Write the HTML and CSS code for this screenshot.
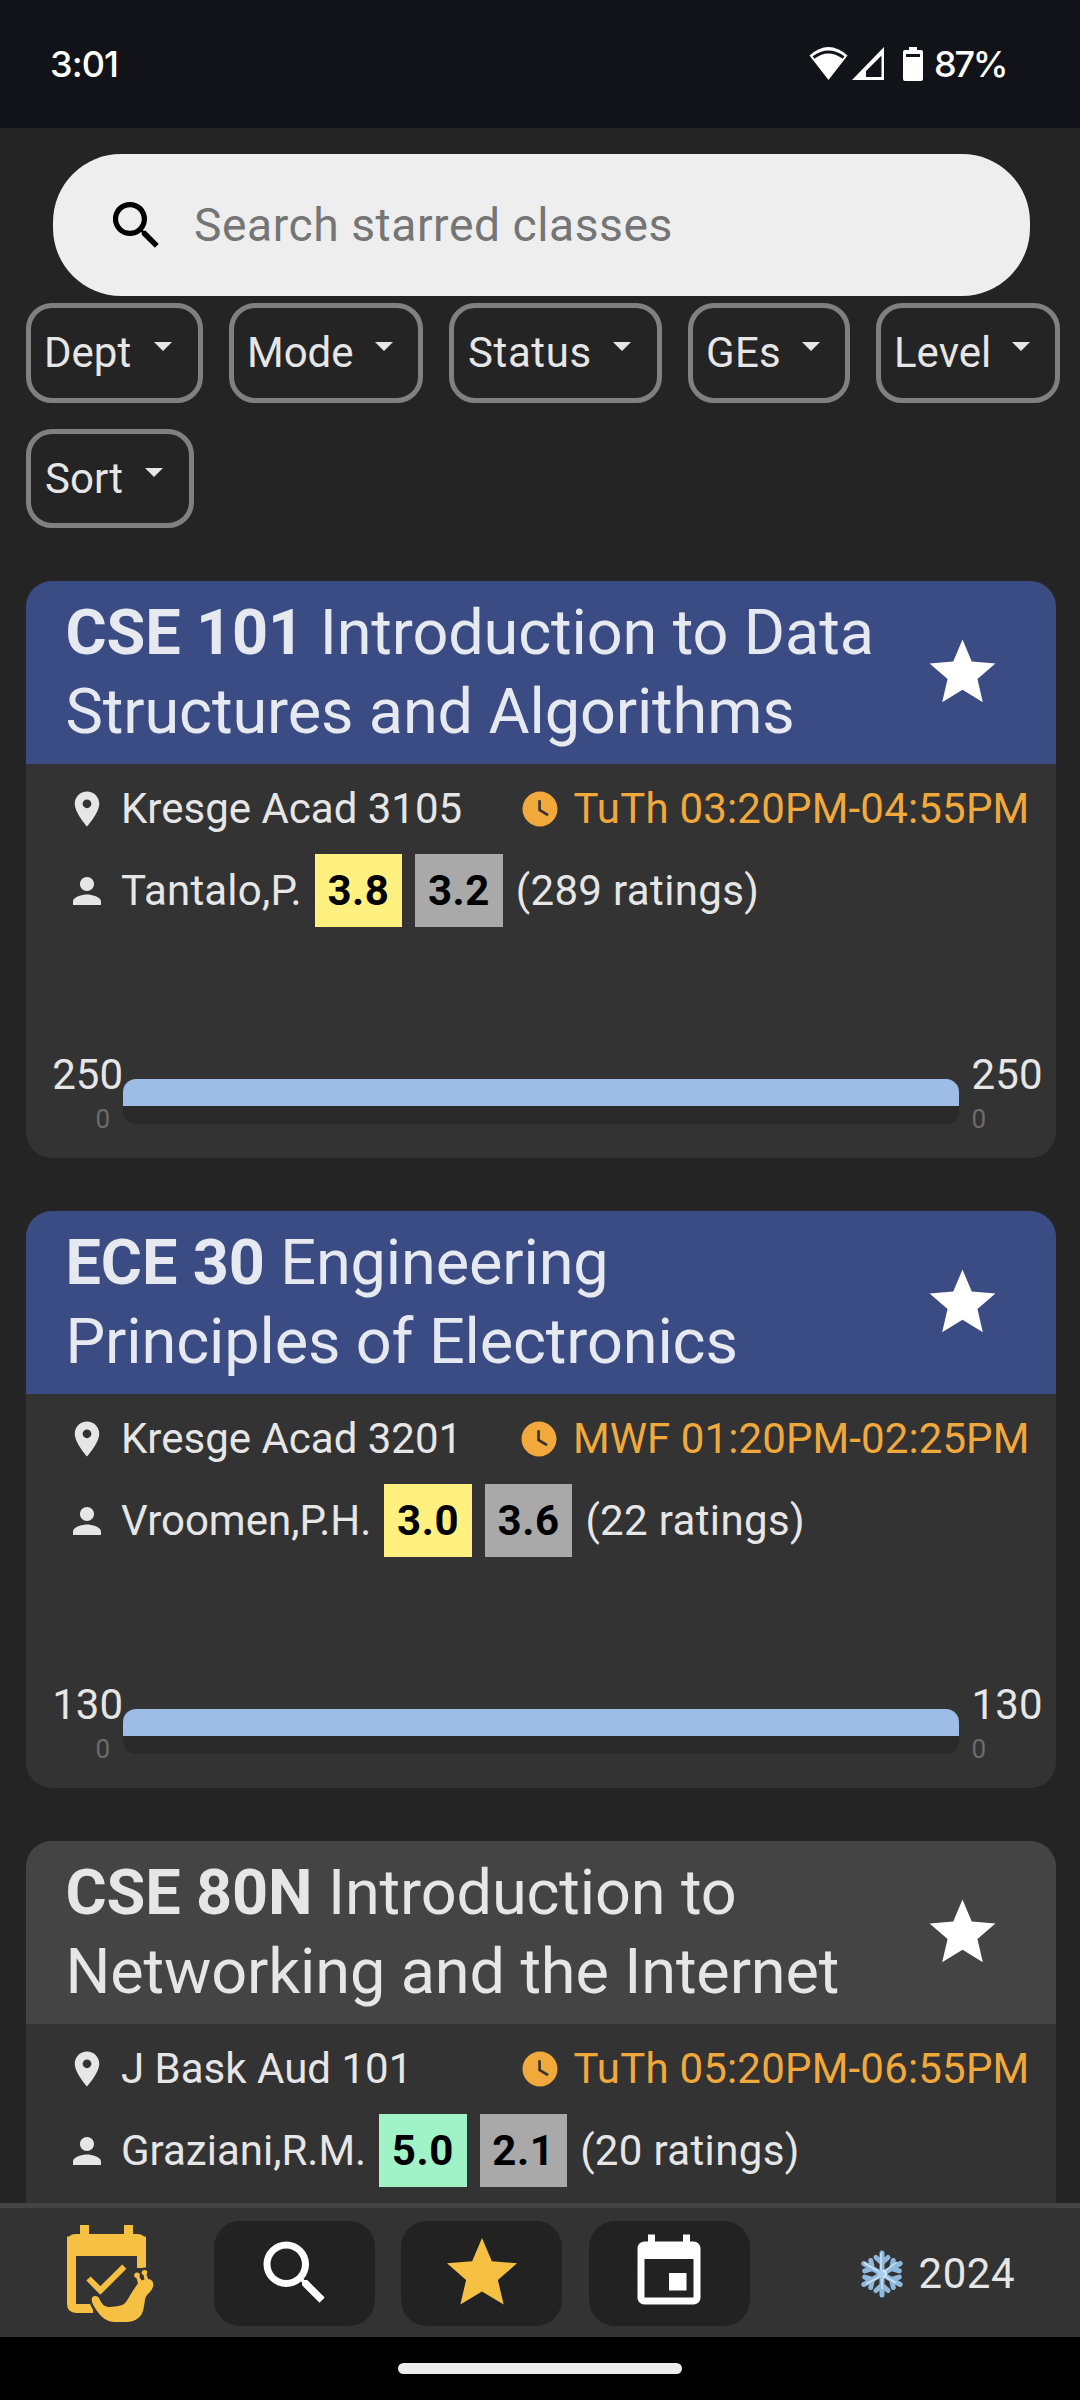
FILE: index.html
```html
<!DOCTYPE html>
<html lang="en">
<head>
<meta charset="utf-8">
<title>Starred classes</title>
<link rel="stylesheet" href="styles.css">
</head>
<body>
<svg width="0" height="0" class="defs">
  <symbol id="search" viewBox="0 0 24 24"><path d="M15.5 14h-.79l-.28-.27A6.47 6.47 0 0 0 16 9.5 6.5 6.5 0 1 0 9.5 16c1.61 0 3.09-.59 4.23-1.57l.27.28v.79l5 4.99L20.49 19l-4.99-5zm-6 0C7.01 14 5 11.99 5 9.5S7.01 5 9.5 5 14 7.01 14 9.5 11.99 14 9.5 14z"/></symbol>
  <symbol id="star" viewBox="0 0 24 24"><path d="M12 17.27L18.18 21l-1.64-7.03L22 9.24l-7.19-.61L12 2 9.19 8.63 2 9.24l5.46 4.73L5.82 21z"/></symbol>
  <symbol id="pin" viewBox="0 0 24 24"><path d="M12 2C8.13 2 5 5.13 5 9c0 5.25 7 13 7 13s7-7.75 7-13c0-3.87-3.13-7-7-7zm0 9.5a2.5 2.5 0 0 1 0-5 2.5 2.5 0 0 1 0 5z"/></symbol>
  <symbol id="person" viewBox="0 0 24 24"><path d="M12 12c2.21 0 4-1.79 4-4s-1.79-4-4-4-4 1.790-4 4 1.790 4 4 4zm0 2c-2.670 0-8 1.340-8 4v2h16v-2c0-2.660-5.330-4-8-4z"/></symbol>
  <symbol id="clock" viewBox="0 0 24 24"><path d="M12 2C6.500 2 2 6.500 2 12s4.500 10 10 10 10-4.500 10-10S17.500 2 12 2zm4.200 14.200L11 13V7h1.500v5.200l4.500 2.700-.8 1.300z"/></symbol>
  <symbol id="event" viewBox="0 0 24 24"><path d="M17 12h-5v5h5v-5zM16 1v2H8V1H6v2H5c-1.110 0-1.990.9-1.990 2L3 19c0 1.100.890 2 2 2h14c1.100 0 2-.9 2-2V5c0-1.100-.9-2-2-2h-1V1h-2zm3 18H5V8h14v11z"/></symbol>
</svg>

<header class="status-bar">
  <span class="time">3:01</span>
  <div class="indicators">
    <svg class="wifi" viewBox="0 0 38 34"><path fill="#fff" d="M0 8.500Q19-8.500 38 8.500L19 33Z"/><path d="M4 10.500Q19-.5 34 10.500" fill="none" stroke="#121318" stroke-width="3"/></svg>
    <svg class="signal" viewBox="0 0 32 34"><path fill="#fff" fill-rule="evenodd" d="M32 0V33H0ZM29.500 8.500V30H14V24Z"/></svg>
    <svg class="battery" viewBox="0 0 20 34"><path fill="#fff" fill-rule="evenodd" d="M6 0h8v3h4q2 0 2 2v27q0 2-2 2H2q-2 0-2-2V5q0-2 2-2h4zM3 7v3h14V7z"/></svg>
    <span class="percent">87%</span>
  </div>
</header>

<main class="content">
  <div class="search-box">
    <svg class="search-icon"><use href="#search"/></svg>
    <span>Search starred classes</span>
  </div>
  <div class="filters">
    <div class="chip dept">Dept</div>
    <div class="chip mode">Mode</div>
    <div class="chip status">Status</div>
    <div class="chip ges">GEs</div>
    <div class="chip level">Level</div>
    <div class="chip sort">Sort</div>
  </div>

  <article class="card">
    <div class="card-head blue">
      <h2><b>CSE 101</b> Introduction to Data Structures and Algorithms</h2>
      <svg class="star"><use href="#star"/></svg>
    </div>
    <div class="row">
      <svg><use href="#pin"/></svg><span>Kresge Acad 3105</span>
      <div class="when"><svg><use href="#clock"/></svg><span>TuTh 03:20PM-04:55PM</span></div>
    </div>
    <div class="row teacher">
      <svg><use href="#person"/></svg><span class="tantalo">Tantalo,P.</span>
      <b class="score yellow">3.8</b><b class="score">3.2</b><span class="ratings">(289 ratings)</span>
    </div>
    <div class="seats">
      <div class="count left"><span>250</span><small>0</small></div>
      <div class="bar"><div class="fill"></div></div>
      <div class="count"><span>250</span><small>0</small></div>
    </div>
  </article>

  <article class="card">
    <div class="card-head blue">
      <h2><b>ECE 30</b> Engineering Principles of Electronics</h2>
      <svg class="star"><use href="#star"/></svg>
    </div>
    <div class="row">
      <svg><use href="#pin"/></svg><span>Kresge Acad 3201</span>
      <div class="when mwf"><svg><use href="#clock"/></svg><span>MWF 01:20PM-02:25PM</span></div>
    </div>
    <div class="row teacher">
      <svg><use href="#person"/></svg><span>Vroomen,P.H.</span>
      <b class="score yellow">3.0</b><b class="score">3.6</b><span class="ratings">(22 ratings)</span>
    </div>
    <div class="seats">
      <div class="count left"><span>130</span><small>0</small></div>
      <div class="bar"><div class="fill"></div></div>
      <div class="count"><span>130</span><small>0</small></div>
    </div>
  </article>

  <article class="card">
    <div class="card-head">
      <h2><b>CSE 80N</b> Introduction to Networking and the Internet</h2>
      <svg class="star"><use href="#star"/></svg>
    </div>
    <div class="row">
      <svg><use href="#pin"/></svg><span>J Bask Aud 101</span>
      <div class="when"><svg><use href="#clock"/></svg><span>TuTh 05:20PM-06:55PM</span></div>
    </div>
    <div class="row teacher">
      <svg><use href="#person"/></svg><span>Graziani,R.M.</span>
      <b class="score green">5.0</b><b class="score">2.1</b><span class="ratings">(20 ratings)</span>
    </div>
  </article>
</main>

<nav class="tabs">
  <svg class="logo" viewBox="0 0 88 98">
    <path fill="none" stroke="#f6c142" stroke-width="9" d="M26 83.500H9Q4.500 83.500 4.500 79V16H74.500V43"/>
    <path d="M0 31V18Q0 9 9 9H13V0H22V9H57V0H66V9H70Q79 9 79 18V31Z"/>
    <path fill="none" stroke="#f6c142" stroke-width="6" d="M21.500 53.500L33.300 65.500L57.300 41.700"/>
    <path class="snail" d="M24.700 75C24 70.500 30 69.500 32 73C35 80 38 82 43 82C50 81.500 56 81 59 77C62 73 64 68 71 58.500L69.500 53C65.500 52.500 67 47.500 70 47.500C74 47.500 72.500 51 72.500 52L74.500 55.500L77.500 54.500L76.500 50C73 48.500 75 45 77.500 45C81 45 80.500 48 79.500 49.500L81 54C86 54.500 87.500 59 85.500 63C83 69 78.500 69 78 75L76.500 84C75 92 68 97 60 97H47C38 97 31 88 28 83C26 80 25 77.500 24.700 75Z"/>
  </svg>
  <div class="tab"><svg><use href="#search"/></svg></div>
  <div class="tab active"><svg><use href="#star"/></svg></div>
  <div class="tab"><svg><use href="#event"/></svg></div>
  <div class="term">
    <svg class="snow" viewBox="-21 -24 42 48">
      <defs><g id="arm"><path d="M0 0V-21M0-11L-6-16.500M0-11L6-16.500"/></g></defs>
      <g fill="none" stroke="#8fb9dc" stroke-width="5" stroke-linecap="round"><use href="#arm"/><use href="#arm" transform="rotate(60)"/><use href="#arm" transform="rotate(120)"/><use href="#arm" transform="rotate(180)"/><use href="#arm" transform="rotate(240)"/><use href="#arm" transform="rotate(300)"/></g>
      <path d="M-1-4V-21M3-3L15-12M-4-3L-18-11M-3 3L-16 10M0 5V15M4 3L14 9" stroke="#cfe3f3" stroke-width="1.500" fill="none"/>
      <circle r="4.500" fill="#a9cdea"/><path d="M1-3A3 3 0 0 1 1 3" stroke="#e3f0fa" stroke-width="1.500" fill="none"/>
    </svg>
    <span>2024</span>
  </div>
</nav>
<footer class="gesture"><div class="handle"></div></footer>
</body>
</html>
```
FILE: styles.css
```css
* { box-sizing: border-box; }
body {
  margin: 0;
  width: 1080px;
  height: 2400px;
  overflow: hidden;
  display: flex;
  flex-direction: column;
  background: #242424;
  color: #e6e6e6;
  font: 42px/54px Roboto, sans-serif;
}
svg { display: block; flex: none; fill: currentColor; }
.defs { position: absolute; }

.status-bar {
  flex: none;
  height: 128px;
  padding: 0 75px 0 50px;
  display: flex;
  justify-content: space-between;
  align-items: center;
  background: #121318;
  color: #fff;
  font: 500 36px/50px Inter, sans-serif;
}
.time { letter-spacing: -0.9px; }
.indicators { display: flex; align-items: center; }
.wifi { width: 39px; height: 34px; }
.signal { width: 32px; height: 34px; margin-left: 4px; }
.battery { width: 20px; height: 34px; margin-left: 19px; }
.percent { width: 71px; margin-left: 11px; letter-spacing: -2.2px; }

.content {
  flex: 1;
  min-height: 0;
  overflow: hidden;
  display: flex;
  flex-direction: column;
}
.search-box {
  flex: none;
  margin: 26px 50px 0 53px;
  height: 142px;
  border-radius: 68px;
  padding-left: 52px;
  display: flex;
  align-items: center;
  gap: 26px;
  background: #eee;
  color: #757575;
  font-size: 46.2px;
  letter-spacing: 0.55px;
}
.search-icon { width: 63px; height: 63px; color: #000; }
.filters {
  flex: none;
  display: flex;
  flex-wrap: wrap;
  gap: 26px;
  padding: 7px 0 0 26px;
}
.chip {
  height: 100px;
  padding: 18px 25px 0 13px;
  border: 5px solid #808080;
  border-radius: 26px;
  display: flex;
}
.chip::after {
  content: "";
  width: 18px;
  height: 9px;
  margin: 16px 0 0 auto;
  background: #e6e6e6;
  clip-path: polygon(0 0, 100% 0, 50% 100%);
}
.dept { width: 177px; padding-right: 26px; }
.mode { width: 194px; }
.status { width: 213px; padding-left: 14px; padding-right: 26px; letter-spacing: 0.6px; }
.ges { width: 162px; letter-spacing: 0.3px; }
.level { width: 184px; }
.sort { width: 168px; height: 99px; padding-left: 14px; padding-right: 26px; }

.card {
  flex: none;
  height: 577px;
  margin: 53px 24px 0 26px;
  border-radius: 26px;
  overflow: hidden;
  display: flex;
  flex-direction: column;
  background: #333;
}
.card-head {
  height: 183px;
  padding: 12px 54px 0 39.500px;
  display: flex;
  justify-content: space-between;
  background: #444;
}
.card-head.blue { background: #3b4c84; color: #e6e9f0; }
h2 { margin: 0; width: 830px; font-size: 63px; line-height: 79px; font-weight: 400; letter-spacing: -0.13px; }
h2 b { font-weight: 700; }
.star { width: 79px; height: 79px; margin-top: 40px; color: #fff; }
.row {
  height: 54px;
  margin-top: 18px;
  padding: 0 26.500px 0 40px;
  display: flex;
  align-items: center;
}
.row svg { width: 42px; height: 42px; margin-right: 13px; }
.row.teacher { height: 73px; }
.tantalo { letter-spacing: 0.2px; }
.when { display: flex; align-items: center; margin-left: auto; color: #f2a93b; letter-spacing: 0.2px; }
.when.mwf { letter-spacing: 0.1px; }
.row .when svg { margin-right: 13px; }
.score {
  width: 87.500px;
  height: 73px;
  margin-left: 13px;
  line-height: 73px;
  letter-spacing: 0.6px;
  text-align: center;
  background: #a9a9a9;
  color: #000;
}
.yellow { background: #fff080; }
.green { background: #9ff3c7; }
.ratings { margin-left: 13px; letter-spacing: 0.35px; }
.seats {
  margin: auto 0 22px;
  padding: 0 12px 0 26px;
  display: flex;
}
.count { display: flex; flex-direction: column; width: 71px; letter-spacing: 0.2px; }
.count.left { align-items: flex-end; letter-spacing: 0; }
.count.left small { margin-right: 13px; }
small { font-size: 26px; line-height: 34px; color: #6c6c6c; }
.bar {
  width: 836px;
  height: 45px;
  margin: 31px 12.500px 0 0;
  border-radius: 13px;
  overflow: hidden;
  background: #292929;
}
.fill { height: 27px; background: #9dbde7; }

.tabs {
  flex: none;
  height: 134px;
  padding: 0 65px 0 67px;
  border-top: 5px solid #444;
  display: flex;
  align-items: center;
  background: #333;
}
.logo { width: 88px; height: 98px; margin: 3px 59px 0 0; color: #f6c142; }
.snail { stroke: #333; stroke-width: 5; paint-order: stroke; }
.tab {
  width: 161px;
  height: 105px;
  margin: 2px 26.400px 0 0;
  border-radius: 26px;
  display: flex;
  align-items: center;
  justify-content: center;
  background: #222;
  color: #fff;
}
.tab svg { width: 84px; height: 84px; margin-top: -2px; }
.tab.active { color: #f6c142; }
.term { margin: 2px 0 0 auto; display: flex; align-items: center; gap: 16px; letter-spacing: 0.5px; }
.snow { width: 42px; height: 48px; }

.gesture {
  flex: none;
  height: 63px;
  padding-top: 26px;
  background: #000;
}
.handle { width: 284px; height: 11px; margin: 0 auto; border-radius: 6px; background: #ebebeb; }
```
